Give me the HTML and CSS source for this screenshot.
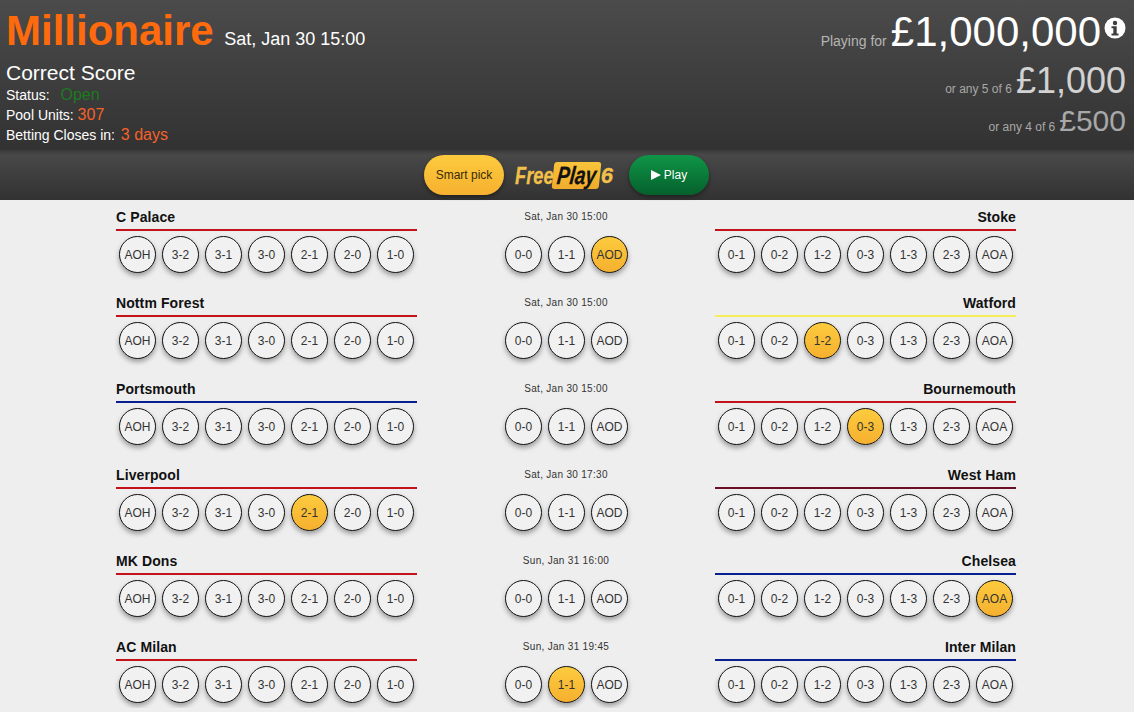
FILE: index.html
```html
<!DOCTYPE html>
<html lang="en">
<head>
  <meta charset="UTF-8">
  <title>Millionaire - Correct Score</title>
  <link rel="stylesheet" href="styles.css">
</head>
<body>
  <header class="top">
    <div class="info">
      <h1><span class="brand">Millionaire</span> <span class="when">Sat, Jan 30 15:00</span></h1>
      <h2>Correct Score</h2>
      <p class="line status">Status: <span class="open">Open</span></p>
      <p class="line">Pool Units: <span class="hot">307</span></p>
      <p class="line">Betting Closes in: <span class="hot days">3 days</span></p>
    </div>
    <div class="prizes">
      <div class="prize first">
        <span class="label">Playing for</span>
        <span class="amount">£1,000,000</span>
        <svg class="info-icon" viewBox="0 0 22 22" width="22" height="22">
          <circle cx="11" cy="11" r="10.5" fill="#fff"/>
          <circle cx="11" cy="6" r="2.2" fill="#3f3f3f"/>
          <path d="M7.5 9.2h5.2v7.2h1.8v2H7.5v-2h1.8v-5.2H7.5z" fill="#3f3f3f"/>
        </svg>
      </div>
      <div class="prize second">
        <span class="label">or any 5 of 6</span>
        <span class="amount">£1,000</span>
      </div>
      <div class="prize third">
        <span class="label">or any 4 of 6</span>
        <span class="amount">£500</span>
      </div>
    </div>
  </header>

  <div class="actions">
    <button class="btn smart">Smart pick</button>
    <div class="logo">
      <span class="free">Free</span><span class="play"><span>Play</span></span><span class="six">6</span>
    </div>
    <button class="btn go"><span class="arrow"></span>Play</button>
  </div>

  <main class="matches" id="matches"></main>

  <script>
    var homeScores = ["AOH", "3-2", "3-1", "3-0", "2-1", "2-0", "1-0"];
    var drawScores = ["0-0", "1-1", "AOD"];
    var awayScores = ["0-1", "0-2", "1-2", "0-3", "1-3", "2-3", "AOA"];

    var games = [
      { home: "C Palace", homeColor: "#c4121a", away: "Stoke", awayColor: "#c4121a", date: "Sat, Jan 30 15:00", pick: "AOD" },
      { home: "Nottm Forest", homeColor: "#c4121a", away: "Watford", awayColor: "#f5ee5a", date: "Sat, Jan 30 15:00", pick: "1-2" },
      { home: "Portsmouth", homeColor: "#0a1f8f", away: "Bournemouth", awayColor: "#c4121a", date: "Sat, Jan 30 15:00", pick: "0-3" },
      { home: "Liverpool", homeColor: "#c4121a", away: "West Ham", awayColor: "#6b0f24", date: "Sat, Jan 30 17:30", pick: "2-1" },
      { home: "MK Dons", homeColor: "#c4121a", away: "Chelsea", awayColor: "#0a1f8f", date: "Sun, Jan 31 16:00", pick: "AOA" },
      { home: "AC Milan", homeColor: "#c4121a", away: "Inter Milan", awayColor: "#0a1f8f", date: "Sun, Jan 31 19:45", pick: "1-1" }
    ];

    function circles(scores, pick) {
      return '<div class="scores">' + scores.map(function(s) {
        return '<span class="score' + (s === pick ? ' picked' : '') + '">' + s + '</span>';
      }).join("") + '</div>';
    }

    document.getElementById("matches").innerHTML = games.map(function(g) {
      return '<section class="match">' +
        '<div class="team"><div class="name" style="border-color:' + g.homeColor + '">' + g.home + '</div>' + circles(homeScores, g.pick) + '</div>' +
        '<div class="draw"><div class="date">' + g.date + '</div>' + circles(drawScores, g.pick) + '</div>' +
        '<div class="team away"><div class="name" style="border-color:' + g.awayColor + '">' + g.away + '</div>' + circles(awayScores, g.pick) + '</div>' +
        '</section>';
    }).join("");
  </script>
</body>
</html>
```

FILE: styles.css
```css
/* Global Styles */
body {
  margin: 0;
  padding: 0;
  font-family: "Liberation Sans", Arial, sans-serif;
  background: #eee;
  color: #111;
}

/* Header */
.top {
  height: 150px;
  box-sizing: border-box;
  padding: 0 8px 0 6px;
  display: flex;
  justify-content: space-between;
  background: linear-gradient(#4b4b4b, #323232);
  color: #fff;
}
.top h1 {
  margin: 7px 0 0;
  height: 47px;
  font-size: 16px;
  font-weight: 400;
  white-space: nowrap;
}
.brand {
  font-size: 42px;
  line-height: 47px;
  font-weight: 700;
  color: #ff6a0d;
}
.when {
  margin-left: 6px;
  font-size: 18px;
}
.top h2 {
  margin: 7px 0 0;
  font-size: 21px;
  line-height: 24px;
  font-weight: 400;
}
.line {
  margin: 0;
  font-size: 14px;
  line-height: 20px;
}
.open {
  margin-left: 7px;
  font-size: 16px;
  color: #1b7a1f;
}
.hot {
  font-size: 16px;
  color: #f4622a;
}
.days {
  margin-left: 2px;
}

/* Prizes */
.prizes {
  display: flex;
  flex-direction: column;
  align-items: flex-end;
}
.prize {
  display: flex;
  align-items: baseline;
  gap: 4px;
  white-space: nowrap;
}
.first {
  height: 59px;
  line-height: 64px;
  color: #fff;
}
.first .label {
  font-size: 14px;
  color: #b5b5b5;
}
.first .amount {
  font-size: 42px;
}
.info-icon {
  align-self: flex-start;
  margin: 17px 0 0 -1px;
}
.second {
  height: 43px;
  line-height: 43px;
  color: #d2d2d2;
}
.second .amount {
  font-size: 36px;
}
.third {
  height: 37px;
  line-height: 37px;
  color: #a8a8a8;
}
.third .amount {
  font-size: 30px;
}
.second .label,
.third .label {
  font-size: 12px;
  color: #a8a8a8;
}

/* Action bar */
.actions {
  height: 50px;
  padding-right: 1px;
  display: flex;
  justify-content: center;
  align-items: center;
  background: linear-gradient(#3a3a3a, #484848 10%, #323232);
}
.btn {
  width: 80px;
  height: 40px;
  padding: 0;
  border: none;
  border-radius: 20px;
  font-family: inherit;
  font-size: 12px;
  box-shadow: 0 2px 4px rgba(0,0,0,0.4);
}
.smart {
  background: linear-gradient(#fdcb3e, #f5b02f);
  color: #3a2a08;
}
.go {
  background: linear-gradient(#0f9647, #05602c);
  color: #fff;
}
.arrow {
  display: inline-block;
  margin-right: 3px;
  border-left: 10px solid #fff;
  border-top: 5.5px solid transparent;
  border-bottom: 5.5px solid transparent;
  vertical-align: -1px;
}
.logo {
  width: 125px;
  padding-right: 5px;
  box-sizing: border-box;
  display: flex;
  justify-content: center;
  align-items: center;
  font-size: 24px;
  line-height: 27px;
  font-weight: 700;
  font-style: italic;
  color: #f2c04a;
  -webkit-text-stroke: 0.3px currentColor;
}
.free,
.six,
.play span {
  display: inline-block;
  transform: scaleX(0.76);
}
.free {
  width: 38px;
  transform-origin: left center;
}
.six {
  width: 13px;
  transform: none;
  text-align: right;
  font-size: 22px;
}
.play {
  width: 47px;
  height: 27px;
  background: linear-gradient(#f9c43b, #f0ab2c);
  color: #111;
  border-radius: 3px;
  text-align: center;
  transform: skewX(-6deg);
}
.play span {
  font-size: 25px;
  transform-origin: center;
  margin: 0 -6px;
}

/* Fixtures */
.matches {
  width: 900px;
  margin-left: 116px;
  padding-top: 8px;
  display: flex;
  flex-direction: column;
  gap: 16px;
}
.match {
  height: 70px;
  display: flex;
  justify-content: space-between;
}
.team {
  width: 301px;
}
.name {
  height: 21px;
  border-bottom: 2px solid;
  font-size: 14px;
  line-height: 19px;
  font-weight: 700;
  letter-spacing: 0.1px;
}
.away .name {
  text-align: right;
}
.scores {
  margin: 5px 0 0 3px;
  display: flex;
  gap: 6px;
}
.draw .scores {
  margin: 0 0 0 1px;
}
.score {
  flex: none;
  width: 37px;
  height: 37px;
  box-sizing: border-box;
  border: 1px solid #111;
  border-radius: 50%;
  background: #f1f1f1;
  box-shadow: 0 3px 5px rgba(0,0,0,0.35);
  font-size: 12px;
  line-height: 36px;
  text-align: center;
  color: #333;
}
.picked {
  background: linear-gradient(#fdcb3e, #f5b02f);
}
.draw {
  width: 124px;
}
.date {
  height: 28px;
  font-size: 10px;
  line-height: 18px;
  letter-spacing: 0.3px;
  text-align: center;
  color: #333;
}
```
